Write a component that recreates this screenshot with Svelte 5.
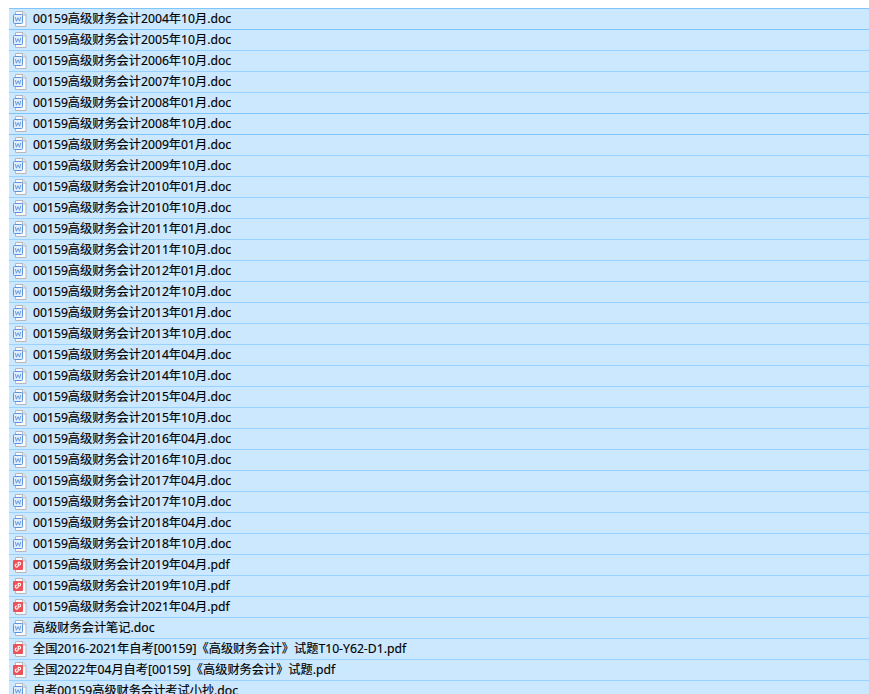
<script>
  const p = "00159高级财务会计";
  const files = [
    "2004年10月.doc", "2005年10月.doc", "2006年10月.doc", "2007年10月.doc", "2008年01月.doc",
    "2008年10月.doc", "2009年01月.doc", "2009年10月.doc", "2010年01月.doc", "2010年10月.doc",
    "2011年01月.doc", "2011年10月.doc", "2012年01月.doc", "2012年10月.doc", "2013年01月.doc",
    "2013年10月.doc", "2014年04月.doc", "2014年10月.doc", "2015年04月.doc", "2015年10月.doc",
    "2016年04月.doc", "2016年10月.doc", "2017年04月.doc", "2017年10月.doc", "2018年04月.doc",
    "2018年10月.doc", "2019年04月.pdf", "2019年10月.pdf", "2021年04月.pdf"
  ].map((f) => p + f).concat([
    "高级财务会计笔记.doc",
    "全国2016-2021年自考[00159]《高级财务会计》试题T10-Y62-D1.pdf",
    "全国2022年04月自考[00159]《高级财务会计》试题.pdf",
    "自考00159高级财务会计考试小抄.doc"
  ]);
  // these rows have the stronger focus-like border on top
  const strong = [0, 1, 5, 6];
</script>

<div class="list">
  {#each files as name, i}
    <div class="row" class:strong={strong.includes(i)}>
      {#if name.endsWith(".pdf")}
        <svg class="icon" width="16" height="16" viewBox="0 0 16 16">
          <path d="M4.500 .5h7.500l3 3v12h-10.500z" fill="#fbfbfb" stroke="#b4b7bd" />
          <path d="M11.500 .5v3.500h3.500" fill="#e4e6ea" stroke="#b4b7bd" />
          <rect x="2" y="3" width="10" height="10" rx="1" fill="#ec5257" />
          <path d="M7.200 5v3.600a1.500 1.500 0 1 1-1.500-1.500M7.200 5.200h1a1.400 1.400 0 0 1 0 2.800h-1" fill="none" stroke="#fff" stroke-width="1.1" />
        </svg>
      {:else}
        <svg class="icon" width="16" height="16" viewBox="0 0 16 16">
          <path d="M4.500 .5h7.500l3 3v12h-10.500z" fill="#fbfbfb" stroke="#b4b7bd" />
          <path d="M11.500 .5v3.500h3.500" fill="#e4e6ea" stroke="#b4b7bd" />
          <rect x="2.500" y="3.500" width="9" height="9" rx="1" fill="#e3eefc" stroke="#5a94e0" />
          <path d="M4.300 6l1.100 4.200 1.600-3.500 1.600 3.500 1.100-4.200" fill="none" stroke="#5a94e0" stroke-width=".9" />
        </svg>
      {/if}
      <span class="name">{name}</span>
    </div>
  {/each}
</div>

<style>
  :global(body) {
    background: #fff;
    overflow: hidden;
  }

  .list {
    height: 694px;
    overflow: hidden;
    padding: 8px 0 0 9px;
    box-sizing: border-box;
    font-family: "Noto Sans", "Noto Sans CJK SC", sans-serif;
    font-size: 12.2px;
    color: #000;
  }

  .row {
    height: 20px;
    border-top: 1px solid #99d1ff;
    background: #cce8ff;
    display: flex;
    align-items: center;
    gap: 6px;
    padding-left: 2px;
  }

  .row.strong {
    border-top-color: #7fc4fb;
  }

  .icon {
    flex: none;
  }

  .name {
    white-space: nowrap;
    line-height: 20px;
    -webkit-text-stroke: 0.15px #000;
  }
</style>
